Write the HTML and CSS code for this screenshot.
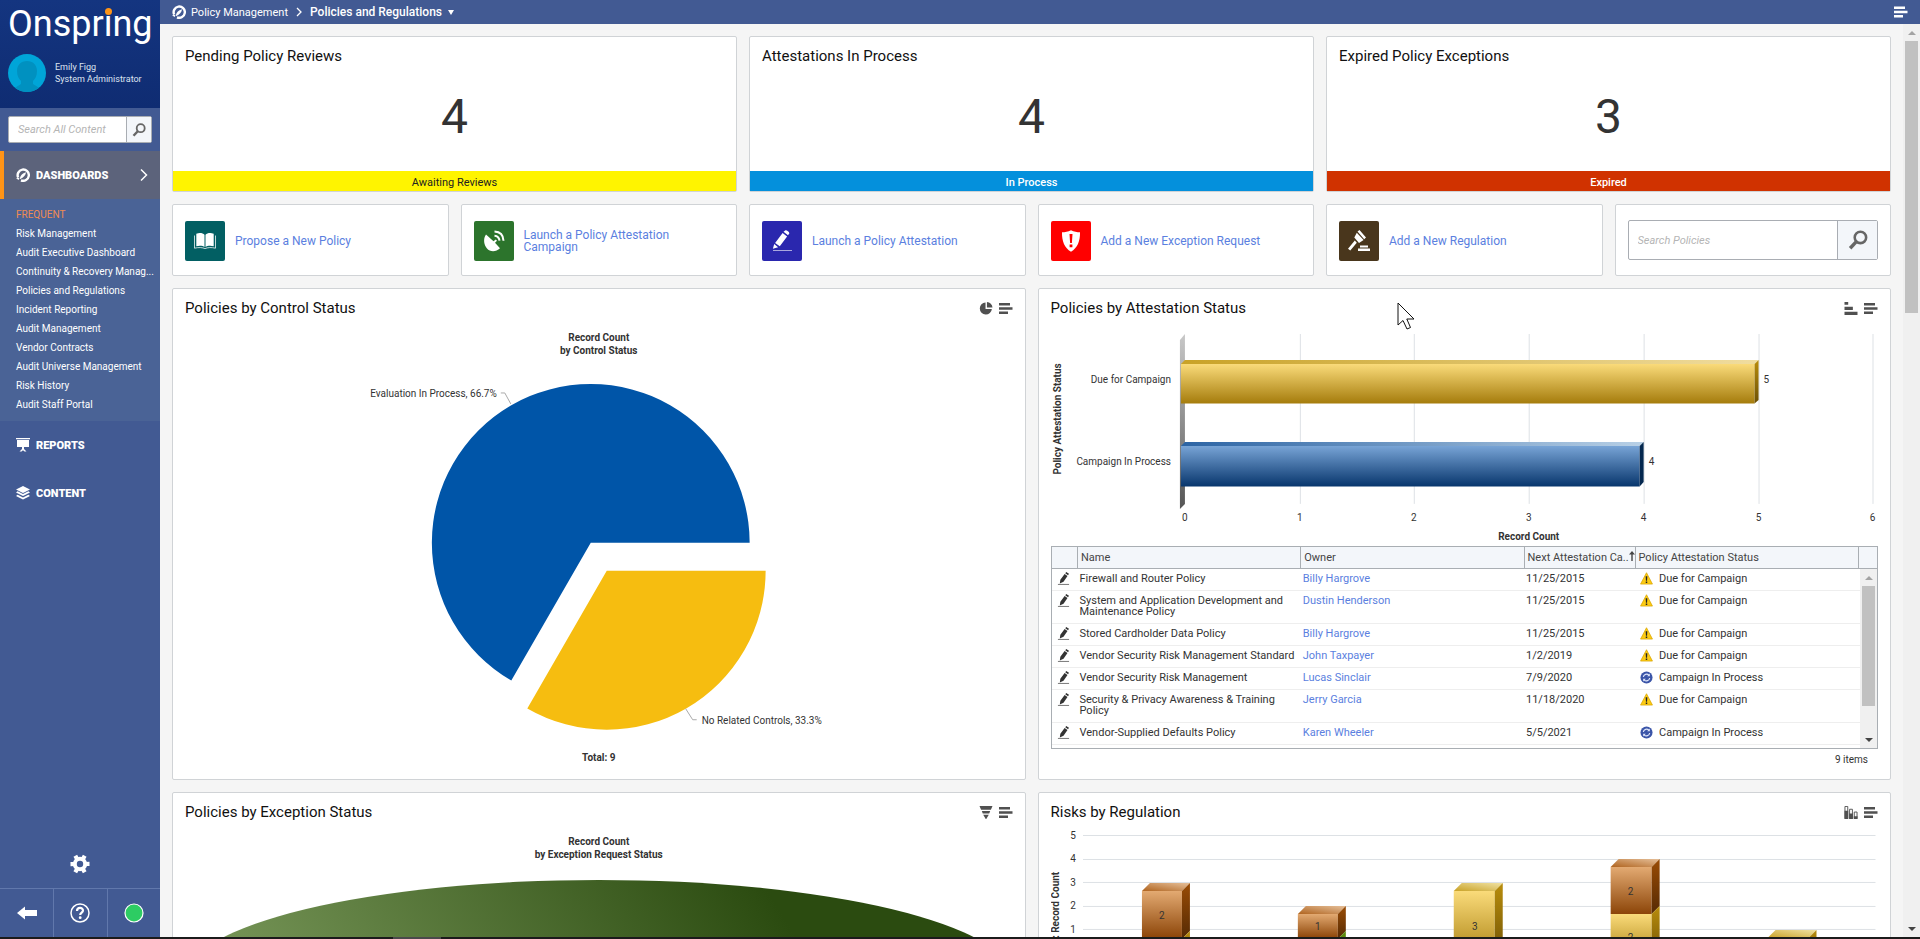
FILE: index.html
```html
<!DOCTYPE html>
<html lang="en">
<head>
    <meta charset="UTF-8" />
    <meta name="viewport" content="width=device-width, initial-scale=1.0" />
    <title>Policies and Regulations</title>
    <link rel="stylesheet" href="styles.css">
</head>
<body>
    <!-- Shared icons -->
    <svg class="sprite" aria-hidden="true">
        <symbol id="i-dash" viewBox="0 0 14 14">
            <path d="M2.2 9.6A5.6 5.6 0 1 1 5 12.3" fill="none" stroke="currentColor" stroke-width="2.4"/>
            <path d="M0 10.2l3.6-.4-1 2.2zM3.9 11.2C4 8 6.400 5.200 10 4.300 9.800 6.800 8 9.400 3.900 11.200z" fill="currentColor"/>
        </symbol>
        <symbol id="i-menu" viewBox="0 0 14 12">
            <path d="M0 .5h11V3H0zM0 4.700h13.500v2.600H0zM0 9h9v2.500H0z" fill="currentColor"/>
        </symbol>
        <symbol id="i-search" viewBox="0 0 14 14">
            <circle cx="8.700" cy="5.200" r="4" fill="none" stroke="currentColor" stroke-width="1.800"/>
            <path d="M6 8L1.500 12.800" stroke="currentColor" stroke-width="2.400" fill="none"/>
        </symbol>
        <symbol id="i-edit" viewBox="0 0 14 14">
            <path d="M8.900 1.300l1-1.300 3 2-1 1.600zM8.200 2.200l3.100 2-4.300 6.200-4 2 .6-4z" fill="currentColor"/>
            <path d="M1 13.400h12" stroke="currentColor" stroke-width="1" opacity=".7"/>
        </symbol>
        <symbol id="i-warn" viewBox="0 0 14 14">
            <path d="M7 .8L13.400 13H.6z" fill="#fccb13" stroke="#d9a400" stroke-width=".8" stroke-linejoin="round"/>
            <path d="M6.100 4.500h1.800L7.600 9.500H6.400zM6.200 10.300h1.600v1.600H6.200z" fill="#222"/>
        </symbol>
        <symbol id="i-process" viewBox="0 0 14 14">
            <circle cx="7" cy="7" r="6.500" fill="#3b55a8"/>
            <path d="M3.600 6.500a3.500 3.500 0 0 1 6-2M10.400 7.500a3.500 3.500 0 0 1-6 2" fill="none" stroke="#dfe6fa" stroke-width="1.300"/>
            <path d="M10.600 2.800v2.900H7.700zM3.400 11.200V8.300h2.900z" fill="#dfe6fa"/>
        </symbol>
    </svg>

    <div class="app">
        <aside class="sidebar">
            <div class="brand">
                <div class="logo">Onspring<span class="logo-dot"></span></div>
                <div class="user">
                    <svg class="avatar" viewBox="0 0 38 38" aria-hidden="true">
                        <circle cx="19" cy="19" r="19" fill="#00a5d8"/>
                        <path d="M19 7c6 0 10 4 10 10 0 5-2 8-4 10v3l6 3.700a19 19 0 0 1-24 0L13 30v-3c-2-2-4-5-4-10 0-6 4-10 10-10z" fill="#0091c0"/>
                    </svg>
                    <div>
                        <div>Emily Figg</div>
                        <div>System Administrator</div>
                    </div>
                </div>
            </div>
            <form class="search search-side">
                <input type="text" placeholder="Search All Content" aria-label="Search All Content">
                <button type="button" aria-label="Search"><svg><use href="#i-search"/></svg></button>
            </form>
            <nav>
                <a href="#" class="nav-item active">
                    <svg><use href="#i-dash"/></svg>DASHBOARDS
                    <svg class="nav-arrow" viewBox="0 0 8 14"><path d="M1 1.500L6.500 7 1 12.500" fill="none" stroke="currentColor" stroke-width="1.500"/></svg>
                </a>
                <div class="frequent">
                    <h4>FREQUENT</h4>
                    <a href="#">Risk Management</a>
                    <a href="#">Audit Executive Dashboard</a>
                    <a href="#" title="Continuity &amp; Recovery Management">Continuity &amp; Recovery Manag...</a>
                    <a href="#">Policies and Regulations</a>
                    <a href="#">Incident Reporting</a>
                    <a href="#">Audit Management</a>
                    <a href="#">Vendor Contracts</a>
                    <a href="#">Audit Universe Management</a>
                    <a href="#">Risk History</a>
                    <a href="#">Audit Staff Portal</a>
                </div>
                <a href="#" class="nav-item">
                    <svg viewBox="0 0 14 14"><path d="M0 0h14v1.300H0zM1 2h12v7H8v2l2.500 2.500h-2L7 12.200 5.500 13.500h-2L6 11V9H1z" fill="currentColor"/></svg>REPORTS
                </a>
                <a href="#" class="nav-item">
                    <svg viewBox="0 0 14 14"><path d="M7 0l7 3.500L7 7 0 3.500zM1.600 5.300L7 8l5.400-2.700L14 6.500l-7 3.500-7-3.500zM1.600 8.700L7 11.400l5.400-2.700L14 9.900l-7 3.500-7-3.500z" fill="currentColor"/></svg>CONTENT
                </a>
            </nav>
            <button class="settings" type="button" aria-label="Settings">
                <svg viewBox="0 0 20 20">
                    <circle cx="10" cy="10" r="5.200" fill="none" stroke="currentColor" stroke-width="4"/>
                    <path d="M10 .5V5M10 15v4.500M1.800 5.200l3.900 2.300M14.300 12.500l3.900 2.300M18.200 5.200l-3.900 2.300M5.700 12.500l-3.900 2.300" transform="rotate(30 10 10)" stroke="currentColor" stroke-width="4.200"/>
                </svg>
            </button>
            <div class="side-footer">
                <button type="button" aria-label="Collapse"><svg viewBox="0 0 20 20"><path d="M0 10l8-6.500v3.500h12v6H8v3.500z" fill="currentColor"/></svg></button>
                <button type="button" aria-label="Help">
                    <svg viewBox="0 0 20 20"><circle cx="10" cy="10" r="9" fill="none" stroke="currentColor" stroke-width="1.500"/><path d="M7 8c0-4 6-4 6-.5 0 2-2.800 2.200-2.800 4.500" fill="none" stroke="currentColor" stroke-width="2.200"/><circle cx="10.200" cy="14.700" r="1.400" fill="currentColor"/></svg>
                </button>
                <button type="button" aria-label="Status"><svg viewBox="0 0 20 20"><circle cx="10" cy="10" r="9" fill="#2dcc63" stroke="#fff" stroke-width="1.200"/></svg></button>
            </div>
        </aside>

        <main class="main">
            <header class="topbar">
                <svg class="crumb-icon"><use href="#i-dash"/></svg>
                <a href="#">Policy Management</a>
                <svg class="crumb-sep" viewBox="0 0 6 10"><path d="M1 1l4 4-4 4" fill="none" stroke="currentColor" stroke-width="1.300"/></svg>
                <a href="#" class="current">Policies and Regulations</a>
                <svg class="crumb-caret" viewBox="0 0 6 6"><path d="M0 1h6L3 6z" fill="currentColor"/></svg>
                <button type="button" aria-label="Menu"><svg><use href="#i-menu"/></svg></button>
            </header>

            <div class="page">
                <div class="content">
                    <div class="row thirds">
                        <section class="card stat">
                            <h2>Pending Policy Reviews</h2>
                            <div class="number">4</div>
                            <div class="label yellow">Awaiting Reviews</div>
                        </section>
                        <section class="card stat">
                            <h2>Attestations In Process</h2>
                            <div class="number">4</div>
                            <div class="label blue">In Process</div>
                        </section>
                        <section class="card stat">
                            <h2>Expired Policy Exceptions</h2>
                            <div class="number">3</div>
                            <div class="label red">Expired</div>
                        </section>
                    </div>

                    <div class="row sixths">
                        <a href="#" class="card action">
                            <span class="tile teal"><svg viewBox="0 0 24 24"><path d="M11.500 5.800C10 4 6.500 3.600 3.300 4.700v12.500c3.200-.9 6.700-.6 8.200.9zM12.500 5.800C14 4 17.500 3.600 20.700 4.700v12.500c-3.200-.9-6.700-.6-8.200.9z" fill="#fff"/><path d="M1.500 6.500v12.700c4-1 8-.8 10.500.4 2.500-1.200 6.500-1.400 10.500-.4V6.500" fill="none" stroke="#fff" stroke-width="1" opacity=".75"/></svg></span>
                            Propose a New Policy
                        </a>
                        <a href="#" class="card action">
                            <span class="tile green"><svg viewBox="0 0 24 24"><path d="M4 5.500l7.500 6.700 2.300-1.800 1.200 1.400-2 2 5 5.400c-4 4-10 3.800-13 .3S.8 10 4 5.500z" fill="#fff"/><path d="M12.500 6.700c3 .2 4.700 2 5 5M12.500 2.500c5.500.3 8.800 3.700 9 9.200" fill="none" stroke="#fff" stroke-width="2"/></svg></span>
                            Launch a Policy Attestation Campaign
                        </a>
                        <a href="#" class="card action">
                            <span class="tile indigo"><svg viewBox="0 0 24 24"><path d="M13.500 2.800l2-1.600c1.800.1 3.500 1.300 3.900 3L18 6.300zM12.600 4l4.500 3.400-7.300 9.800-4.700-3.300zM4.200 15l3.900 3.200-5.200 1.500z" fill="#fff"/><path d="M3 21.500h19" stroke="#fff" opacity=".6"/></svg></span>
                            Launch a Policy Attestation
                        </a>
                        <a href="#" class="card action">
                            <span class="tile crimson"><svg viewBox="0 0 24 24"><path d="M12 1.200c3 1.600 6 2 9 2 .2 9-2.500 15.500-9 19.600C5.500 18.700 2.800 12.200 3 3.200c3 0 6-.4 9-2z" fill="#fff"/><path d="M10.500 5h3l-.6 9h-1.800zM10.600 15.500h2.800v2.800h-2.800z" fill="#f00"/></svg></span>
                            Add a New Exception Request
                        </a>
                        <a href="#" class="card action">
                            <span class="tile brown"><svg viewBox="0 0 24 24"><path d="M10.500 2.500l2-1.500 6.500 7.500-1.800 1.800zM9.800 3.800l6.800 7.300-4.600 2.900-4.700-5.500zM7.800 11.500l2 2.200-6.500 7.800L1 19.700zM13 16.500h8v2h-8zM11 19.500h12V22H11z" fill="#fff"/></svg></span>
                            Add a New Regulation
                        </a>
                        <div class="card action-search">
                            <form class="search search-card">
                                <input type="text" placeholder="Search Policies" aria-label="Search Policies">
                                <button type="button" aria-label="Search"><svg><use href="#i-search"/></svg></button>
                            </form>
                        </div>
                    </div>

                    <div class="row halves">
                        <section class="card">
                            <div class="card-head">
                                <h2>Policies by Control Status</h2>
                                <button type="button" aria-label="Chart type"><svg viewBox="0 0 14 14"><path d="M6.500.500V7.500H13.300A6.500 6.500 0 1 1 6.500.500zM8 0a6.300 6.300 0 0 1 6 6H8z" fill="currentColor"/></svg></button>
                                <button type="button" aria-label="Menu"><svg><use href="#i-menu"/></svg></button>
                            </div>
                            <svg class="chart" viewBox="0 0 828 442" role="img" aria-label="Record Count by Control Status">
                                <g class="bold middle">
                                    <text x="414" y="14">Record Count</text>
                                    <text x="414" y="27">by Control Status</text>
                                    <text x="414" y="434">Total: 9</text>
                                </g>
                                <path d="M406 216H565A159 159 0 1 0 326.500 353.700z" fill="#0055a8"/>
                                <path d="M422 244H581A159 159 0 0 1 342.500 381.700z" fill="#f6bd10"/>
                                <path d="M316 66h4l6 11M501 382l7 11h4" class="leader"/>
                                <text x="312" y="70" class="end">Evaluation In Process, 66.7%</text>
                                <text x="517" y="397">No Related Controls, 33.3%</text>
                            </svg>
                        </section>

                        <section class="card">
                            <div class="card-head">
                                <h2>Policies by Attestation Status</h2>
                                <button type="button" aria-label="Chart type"><svg viewBox="0 0 14 14"><path d="M0 0h4v3H0zM0 5h9v3.500H0zM0 10.500h14V14H0z" fill="currentColor"/></svg></button>
                                <button type="button" aria-label="Menu"><svg><use href="#i-menu"/></svg></button>
                            </div>
                            <svg class="chart" viewBox="1 -1 828 219" role="img" aria-label="Record Count by Policy Attestation Status">
                                <defs>
                                    <linearGradient id="gold" x2="0" y2="1"><stop stop-color="#fadb7a"/><stop offset="1" stop-color="#a57c0c"/></linearGradient>
                                    <linearGradient id="goldTop"><stop stop-color="#c9a227"/><stop offset="1" stop-color="#f0dda0"/></linearGradient>
                                    <linearGradient id="goldSide" x2="0" y2="1"><stop stop-color="#b98d0c"/><stop offset="1" stop-color="#6b4f04"/></linearGradient>
                                    <linearGradient id="navy" x2="0" y2="1"><stop stop-color="#78a4d6"/><stop offset="1" stop-color="#08366d"/></linearGradient>
                                    <linearGradient id="navyTop"><stop stop-color="#2c64a4"/><stop offset="1" stop-color="#b8d0e6"/></linearGradient>
                                    <linearGradient id="wall" x2="0" y2="1"><stop stop-color="#c8c8c8"/><stop offset="1" stop-color="#555"/></linearGradient>
                                </defs>
                                <path class="grid" d="M250.500 6V176M364.500 6V176M479.500 6V176M594.500 6V176M709.500 6V176M823.500 6V176"/>
                                <path d="M130 12l5-6V176l-5 5z" fill="url(#wall)"/>
                                <path d="M131 36l4-4H709l-4 4z" fill="url(#goldTop)"/>
                                <path d="M131 36H705V75.500H131z" fill="url(#gold)"/>
                                <path d="M705 36l4-4V72l-4 3.500z" fill="url(#goldSide)"/>
                                <path d="M131 118l4-4H594l-4 4z" fill="url(#navyTop)"/>
                                <path d="M131 118H590V158.500H131z" fill="url(#navy)"/>
                                <path d="M590 118l4-4V154l-4 4.500z" fill="#04284f"/>
                                <text x="121" y="55" class="end">Due for Campaign</text>
                                <text x="121" y="137" class="end">Campaign In Process</text>
                                <text x="714" y="55">5</text>
                                <text x="599" y="137">4</text>
                                <g class="middle">
                                    <text x="135" y="193">0</text>
                                    <text x="250" y="193">1</text>
                                    <text x="364" y="193">2</text>
                                    <text x="479" y="193">3</text>
                                    <text x="594" y="193">4</text>
                                    <text x="709" y="193">5</text>
                                    <text x="823" y="193">6</text>
                                    <text x="479" y="212" class="bold">Record Count</text>
                                    <text transform="translate(11 91) rotate(-90)" class="bold">Policy Attestation Status</text>
                                </g>
                            </svg>
                            <div class="grid-box">
                                <table>
                                    <colgroup><col class="c-edit"><col><col><col class="c-date"><col class="c-status"><col class="c-bar"></colgroup>
                                    <thead>
                                        <tr><th aria-label="Edit"></th><th>Name</th><th>Owner</th><th class="sorted">Next Attestation Ca..<svg viewBox="0 0 6 10"><path d="M0 3.500L3 0l3 3.500H3.700V10H2.300V3.500z" fill="currentColor"/></svg></th><th>Policy Attestation Status</th><th aria-label="Scroll"></th></tr>
                                    </thead>
                                </table>
                                <div class="grid-scroll">
                                    <table id="policyRows">
                                        <colgroup><col class="c-edit"><col><col><col class="c-date"><col class="c-status"><col class="c-bar"></colgroup>
                                        <tbody></tbody>
                                    </table>
                                    <div class="scrollbar" aria-hidden="true">
                                        <i class="up"></i><div class="thumb"></div><i class="down"></i>
                                    </div>
                                </div>
                            </div>
                            <p class="count">9 items</p>
                        </section>
                    </div>

                    <div class="row halves">
                        <section class="card">
                            <div class="card-head">
                                <h2>Policies by Exception Status</h2>
                                <button type="button" aria-label="Chart type"><svg viewBox="0 0 14 14"><path d="M0 0h14l-1.700 4H1.700zM2.500 5.500h9l-1 2.500h-7zM4 9.300h6L7.300 14h-.6z" fill="currentColor"/></svg></button>
                                <button type="button" aria-label="Menu"><svg><use href="#i-menu"/></svg></button>
                            </div>
                            <svg class="chart" viewBox="0 0 828 300" role="img" aria-label="Record Count by Exception Request Status">
                                <defs>
                                    <linearGradient id="leaf" gradientUnits="userSpaceOnUse" x1="90" y1="230" x2="520" y2="-40"><stop stop-color="#779658"/><stop offset="1" stop-color="#2b4b10"/></linearGradient>
                                </defs>
                                <g class="bold middle">
                                    <text x="414" y="14">Record Count</text>
                                    <text x="414" y="27">by Exception Request Status</text>
                                </g>
                                <ellipse cx="414" cy="148" rx="414" ry="99" fill="url(#leaf)"/>
                            </svg>
                        </section>

                        <section class="card">
                            <div class="card-head">
                                <h2>Risks by Regulation</h2>
                                <button type="button" aria-label="Chart type"><svg viewBox="0 0 14 14"><path d="M.5.500h3v13h-3zM5.500 3.500h3v10h-3zM10.500 6.500h3v7h-3z" fill="none" stroke="currentColor"/><path d="M0 5h4v9H0zM5 8h4v6H5zM10 11h4v3h-4z" fill="currentColor"/></svg></button>
                                <button type="button" aria-label="Menu"><svg><use href="#i-menu"/></svg></button>
                            </div>
                            <svg class="chart" viewBox="1 2 828 300" role="img" aria-label="Record Count by Regulation">
                                <defs>
                                    <linearGradient id="rust" x2="0" y2="1"><stop stop-color="#e3aa72"/><stop offset="1" stop-color="#8c4508"/></linearGradient>
                                    <linearGradient id="rustTop" x1="0" y1="1" x2="1" y2="0"><stop stop-color="#b0641f"/><stop offset="1" stop-color="#e6c09a"/></linearGradient>
                                    <linearGradient id="rustSide" x2="0" y2="1"><stop stop-color="#9a4c05"/><stop offset="1" stop-color="#552a04"/></linearGradient>
                                    <linearGradient id="sunTop" x1="0" y1="1" x2="1" y2="0"><stop stop-color="#c9a227"/><stop offset="1" stop-color="#f0e2a4"/></linearGradient>
                                </defs>
                                <path class="grid" d="M33 6.500H826M33 30.500H826M33 53.500H826M33 77.500H826M33 100.500H826M33 124.500H826"/>
                                <g class="middle">
                                    <text x="23" y="10">5</text>
                                    <text x="23" y="33">4</text>
                                    <text x="23" y="57">3</text>
                                    <text x="23" y="80">2</text>
                                    <text x="23" y="104">1</text>
                                    <text transform="translate(9 76) rotate(-90)" class="bold">: Record Count</text>
                                </g>
                                <path d="M92 62l8-8h40l-8 8z" fill="url(#rustTop)"/>
                                <path d="M92 62h40v47H92z" fill="url(#rust)"/>
                                <path d="M132 62l8-8v48l-8 8z" fill="url(#rustSide)"/>
                                <path d="M132 110l8-8v24l-8 8z" fill="url(#goldSide)"/>
                                <path d="M92 109h40v25H92z" fill="url(#gold)"/>

                                <path d="M248 85l8-8h40l-8 8z" fill="url(#rustTop)"/>
                                <path d="M248 85h40v24h-40z" fill="url(#rust)"/>
                                <path d="M288 85l8-8v25l-8 8z" fill="url(#rustSide)"/>
                                <path d="M248 109h40v25h-40zM288 110l8-8v24l-8 8z" fill="#5c8a0c"/>

                                <path d="M404 62l8-8h41l-8 8z" fill="url(#sunTop)"/>
                                <path d="M404 62h41v72h-41z" fill="url(#gold)"/>
                                <path d="M445 62l8-8v72l-8 8z" fill="url(#goldSide)"/>

                                <path d="M561 38l8-8h41l-8 8z" fill="url(#rustTop)"/>
                                <path d="M561 38h41v47h-41z" fill="url(#rust)"/>
                                <path d="M602 38l8-8v47l-8 8z" fill="url(#rustSide)"/>
                                <path d="M561 85h41v49h-41z" fill="url(#gold)"/>
                                <path d="M602 85l8-8v49l-8 8z" fill="url(#goldSide)"/>

                                <path d="M718 109l8-8h41l-8 8z" fill="url(#sunTop)"/>
                                <path d="M718 109h41v25h-41z" fill="url(#gold)"/>
                                <path d="M759 109l8-8v25l-8 8z" fill="url(#goldSide)"/>

                                <g class="middle">
                                    <text x="112" y="90">2</text>
                                    <text x="268" y="101">1</text>
                                    <text x="425" y="101">3</text>
                                    <text x="581" y="66">2</text>
                                    <text x="581" y="112">2</text>
                                </g>
                            </svg>
                        </section>
                    </div>
                </div>

                <div class="scrollbar page-bar" aria-hidden="true">
                    <i class="up"></i><div class="thumb"></div><i class="down"></i>
                </div>
            </div>
        </main>
    </div>
    <div class="taskbar"><span></span></div>

    <svg class="pointer" viewBox="0 0 19 28" aria-hidden="true"><path d="M1 1v22l5-4.500 4 8.500 3.500-1.500-3.700-8.500H17z" fill="#fff" stroke="#111"/></svg>

    <script>
        const policies = [
            ["Firewall and Router Policy", "Billy Hargrove", "11/25/2015", "Due for Campaign"],
            ["System and Application Development and Maintenance Policy", "Dustin Henderson", "11/25/2015", "Due for Campaign"],
            ["Stored Cardholder Data Policy", "Billy Hargrove", "11/25/2015", "Due for Campaign"],
            ["Vendor Security Risk Management Standard", "John Taxpayer", "1/2/2019", "Due for Campaign"],
            ["Vendor Security Risk Management", "Lucas Sinclair", "7/9/2020", "Campaign In Process"],
            ["Security &amp; Privacy Awareness &amp; Training Policy", "Jerry Garcia", "11/18/2020", "Due for Campaign"],
            ["Vendor-Supplied Defaults Policy", "Karen Wheeler", "5/5/2021", "Campaign In Process"]
        ];

        document.querySelector("#policyRows tbody").innerHTML = policies.map(([name, owner, date, status]) => `
            <tr>
                <td><button type="button" aria-label="Edit"><svg><use href="#i-edit"/></svg></button></td>
                <td>${name}</td>
                <td><a href="#">${owner}</a></td>
                <td>${date}</td>
                <td><div class="status"><svg><use href="#${status === "Due for Campaign" ? "i-warn" : "i-process"}"/></svg>${status}</div></td>
                <td></td>
            </tr>
        `).join("");
    </script>
</body>
</html>
```
FILE: styles.css
```css
* {
    margin: 0;
    padding: 0;
    box-sizing: border-box;
    font-family: Roboto, sans-serif;
}

body {
    height: 100vh;
    display: flex;
    flex-direction: column;
    overflow: hidden;
    background: #f5f5f5;
    color: #333;
    font-size: 10px;
}

a {
    color: #5b7fe0;
    text-decoration: none;
}

button {
    background: none;
    border: none;
    color: inherit;
    cursor: pointer;
    display: flex;
    align-items: center;
    justify-content: center;
}

.sprite {
    display: none;
}

.app {
    flex: 1;
    min-height: 0;
    display: flex;
}

/* Sidebar */
.sidebar {
    width: 160px;
    flex: none;
    display: flex;
    flex-direction: column;
    background: #425a93;
    color: #fff;
}

.brand {
    height: 108px;
    padding: 0 8px;
    background: linear-gradient(#143580, #0f2c72);
}

.logo {
    position: relative;
    height: 54px;
    font-size: 36px;
    line-height: 48px;
    white-space: nowrap;
}

.logo-dot {
    position: absolute;
    left: 97px;
    top: 8px;
    width: 7px;
    height: 7px;
    border-radius: 50%;
    background: #ff9416;
}

.user {
    display: flex;
    align-items: center;
    gap: 9px;
    font-size: 9px;
    line-height: 12px;
    color: #dde3f0;
}

.avatar {
    width: 38px;
    height: 38px;
}

.search {
    display: flex;
    background: #fff;
    border: 1px solid #a9adb3;
    border-radius: 2px;
}

.search input {
    flex: 1;
    min-width: 0;
    border: none;
    outline: none;
    background: none;
    padding: 0 9px;
    font-size: 11px;
    font-style: italic;
}

.search input::placeholder {
    color: #b5b5b5;
}

.search button {
    border-left: 1px solid #a9adb3;
    background: #f3f6fa;
    color: #666;
}

.search-side {
    height: 27px;
    margin: 8px;
}

.search-side button {
    width: 25px;
}

.search-side svg {
    width: 14px;
    height: 14px;
}

.nav-item {
    display: flex;
    align-items: center;
    gap: 6px;
    height: 48px;
    padding: 0 12px 0 16px;
    color: #fff;
    font-size: 11px;
    font-weight: 900;
}

.nav-item svg {
    width: 14px;
    height: 14px;
}

.nav-item.active {
    border-left: 4px solid #ff9416;
    padding-left: 12px;
    background: #5c637b;
}

.nav-item .nav-arrow {
    width: 8px;
    margin-left: auto;
}

.frequent {
    padding: 6px 4px 7px 16px;
    background: #4a6396;
}

.frequent h4,
.frequent a {
    display: block;
    height: 19px;
    line-height: 19px;
    font-weight: 400;
    color: #fff;
    white-space: nowrap;
}

.frequent h4 {
    font-size: 10px;
    color: #f08b52;
}

.settings {
    height: 48px;
    margin-top: auto;
}

.sidebar .settings svg,
.side-footer svg {
    width: 20px;
    height: 20px;
}

.side-footer {
    display: grid;
    grid-template-columns: repeat(3, 1fr);
    height: 49px;
    border-top: 1px solid #6178ac;
}

.side-footer button + button {
    border-left: 1px solid #6178ac;
}

/* Top bar */
.main {
    flex: 1;
    min-width: 0;
    display: flex;
    flex-direction: column;
}

.topbar {
    flex: none;
    display: flex;
    align-items: center;
    height: 24px;
    padding: 0 12px;
    background: #425a93;
    color: #fff;
    font-size: 11px;
}

.topbar a {
    color: #fff;
}

.topbar .current {
    font-size: 12px;
    font-weight: 500;
}

.topbar button {
    margin-left: auto;
}

.topbar button svg {
    width: 14px;
    height: 12px;
}

.crumb-icon {
    width: 14px;
    height: 14px;
    margin-right: 5px;
}

.crumb-sep {
    width: 6px;
    height: 10px;
    margin: 0 8px;
}

.crumb-caret {
    width: 6px;
    height: 6px;
    margin-left: 6px;
}

/* Page */
.page {
    flex: 1;
    min-height: 0;
    display: flex;
}

.content {
    flex: 1;
    min-width: 0;
    overflow: hidden;
    padding: 12px 12px 0;
    display: flex;
    flex-direction: column;
    gap: 12px;
}

.row {
    flex: none;
    display: grid;
    gap: 12px;
}

.thirds {
    grid-template-columns: repeat(3, 1fr);
}

.sixths {
    grid-template-columns: repeat(6, 1fr);
}

.halves {
    grid-template-columns: repeat(2, 1fr);
}

.card {
    min-width: 0;
    padding: 0 12px;
    background: #fff;
    border: 1px solid #d0d3d6;
    border-radius: 2px;
}

.halves .card {
    padding-bottom: 8px;
}

h2 {
    font-size: 15px;
    font-weight: 400;
    line-height: 38px;
    color: #111;
}

.stat {
    padding: 0;
    text-align: center;
}

.stat h2 {
    padding: 0 12px;
    text-align: left;
}

.stat .number {
    height: 96px;
    font-size: 48px;
    line-height: 84px;
}

.stat .label {
    height: 20px;
    font-size: 11px;
    font-weight: 500;
    line-height: 23px;
    color: #fff;
}

.stat .yellow {
    background: #fff400;
    color: #222;
    font-weight: 400;
}

.stat .blue {
    background: #0490dc;
}

.stat .red {
    background: #d03200;
}

.action,
.action-search {
    display: flex;
    align-items: center;
    height: 72px;
}

.action {
    gap: 10px;
    padding-top: 2px;
    font-size: 12px;
    line-height: 12px;
}

.tile {
    flex: none;
    display: flex;
    align-items: center;
    justify-content: center;
    width: 40px;
    height: 40px;
    border-radius: 2px;
}

.tile svg {
    width: 24px;
    height: 24px;
}

.teal { background: #025f63; }
.green { background: #2c742c; }
.indigo { background: #2a27ae; }
.crimson { background: #f00; }
.brown { background: #49361c; }

.search-card {
    flex: 1;
    height: 40px;
}

.search-card button {
    width: 40px;
}

.search-card svg {
    width: 20px;
    height: 20px;
}

.card-head {
    display: flex;
    align-items: center;
    gap: 6px;
}

.card-head h2 {
    flex: 1;
}

.card-head button {
    color: #505050;
}

.card-head svg {
    width: 14px;
    height: 13px;
}

/* Charts */
.chart {
    display: block;
    width: 100%;
    height: auto;
}

.chart text {
    font-size: 10px;
    fill: #333;
}

.chart .bold,
.chart .bold text {
    font-weight: 700;
}

.middle {
    text-anchor: middle;
}

.end {
    text-anchor: end;
}

.leader {
    fill: none;
    stroke: #aaa;
}

.grid {
    fill: none;
    stroke: #dde1e5;
}

/* Data grid */
.grid-box {
    border: 1px solid #a9aeb3;
}

table {
    width: 100%;
    table-layout: fixed;
    border-collapse: collapse;
}

.c-edit { width: 26px; }
.c-date { width: 111px; }
.c-status { width: 223px; }
.c-bar { width: 19px; }

th {
    height: 22px;
    padding: 0 3px;
    background: #f3f6fa;
    border-bottom: 1px solid #a9aeb3;
    font-size: 11px;
    font-weight: 400;
    text-align: left;
    white-space: nowrap;
    color: #444;
}

th + th {
    border-left: 1px solid #a9aeb3;
}

.sorted svg {
    width: 6px;
    height: 10px;
}

td {
    padding: 4px 2px 6px;
    border-bottom: 1px solid #eee;
    font-size: 11px;
    line-height: 11px;
    vertical-align: top;
}

td svg {
    display: block;
    flex: none;
    width: 13px;
    height: 13px;
}

td button {
    height: 11px;
    padding-left: 3px;
}

.status {
    display: flex;
    align-items: center;
    gap: 6px;
    height: 11px;
    padding-left: 3px;
}

.grid-scroll {
    position: relative;
    height: 179px;
    overflow: hidden;
}

.count {
    padding: 0 10px;
    line-height: 22px;
    text-align: right;
}

/* Scrollbars */
.scrollbar {
    flex: none;
    width: 17px;
    display: flex;
    flex-direction: column;
    align-items: center;
    background: #f0f0f0;
}

.grid-scroll .scrollbar {
    position: absolute;
    top: 0;
    right: 0;
    bottom: 0;
}

.scrollbar .thumb {
    width: 13px;
    height: 120px;
    background: #c1c1c1;
}

.scrollbar i {
    border: 4px solid transparent;
}

.scrollbar .up {
    margin: 7px 0 6px;
    border-top: none;
    border-bottom: 4px solid #a3a3a3;
}

.scrollbar .down {
    margin: auto 0 6px;
    border-bottom: none;
    border-top: 4px solid #444;
}

.page-bar .thumb {
    height: 272px;
}

.taskbar {
    flex: none;
    height: 2px;
    padding-left: 393px;
    background: #1b1b1b;
}

.taskbar span {
    display: block;
    width: 48px;
    height: 2px;
    background: #4a4a4a;
}

.pointer {
    position: absolute;
    left: 1397px;
    top: 302px;
    width: 19px;
    height: 28px;
}
```
